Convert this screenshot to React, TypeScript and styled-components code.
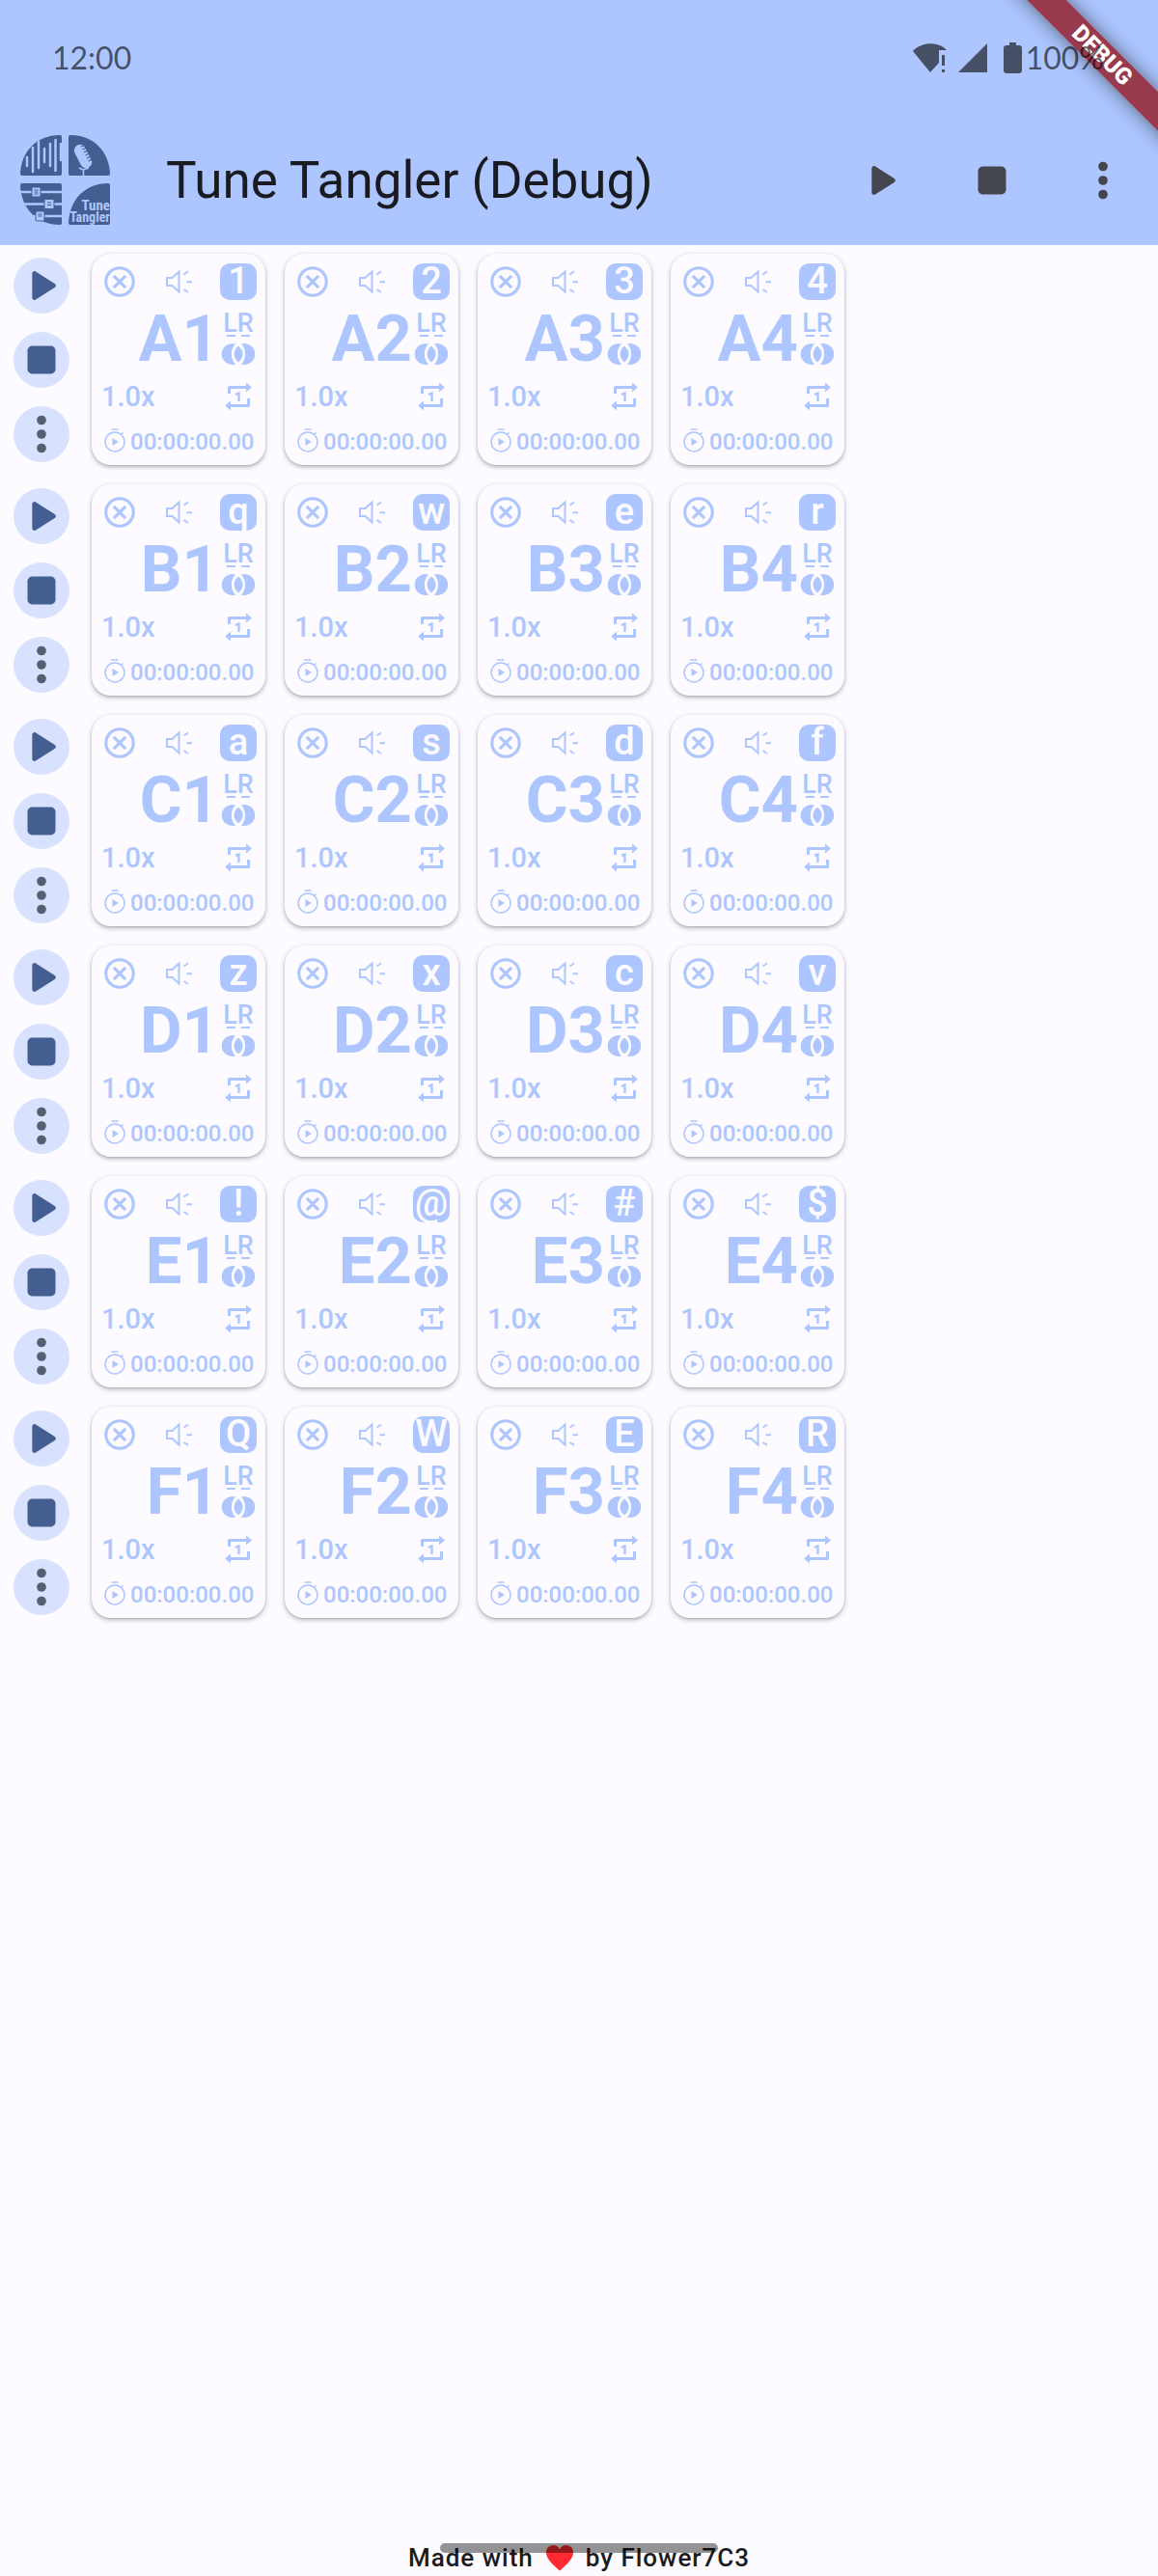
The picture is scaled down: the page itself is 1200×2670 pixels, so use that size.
import React from 'react';
import styled, { createGlobalStyle } from 'styled-components';

const GlobalStyle = createGlobalStyle`
  * {
    box-sizing: border-box;
  }

  body {
    margin: 0;
    background-color: #fdfbff;
    font-family: Roboto, 'Liberation Sans', sans-serif;
  }
`;

const Screen = styled.div`
  position: relative;
  min-height: 100vh;
  display: flex;
  flex-direction: column;
  overflow: hidden;
`;

const Header = styled.header`
  background-color: #adc6ff;
`;

const StatusBar = styled.div`
  position: relative;
  z-index: 2;
  height: 119px;
  padding: 0 56px 0 54px;
  display: flex;
  align-items: center;
  justify-content: space-between;
  font-family: Lato, sans-serif;
  font-size: 32px;
  color: rgba(0, 0, 0, 0.6);
`;

const StatusIcons = styled.div`
  display: flex;
  align-items: center;
`;

const StatusGlyph = styled.svg<{ $gap: number }>`
  display: block;
  margin-right: ${props => props.$gap}px;
  fill: currentColor;
`;

const AppBar = styled.div`
  height: 135px;
  padding-left: 20px;
  display: flex;
  align-items: center;
`;

const Title = styled.h1`
  flex: 1;
  margin: 0 0 0 57px;
  font-size: 53px;
  line-height: 64px;
  font-weight: 400;
  color: #1a1b20;
`;

const BarButton = styled.button`
  width: 115px;
  height: 115px;
  padding: 0;
  border: 0;
  background: none;
  display: grid;
  place-items: center;
  color: #44464f;
`;

const RibbonCorner = styled.div`
  position: absolute;
  z-index: 1;
  top: 0;
  right: 0;
  width: 200px;
  height: 200px;
  overflow: hidden;
  pointer-events: none;
`;

const Ribbon = styled.div`
  position: absolute;
  top: 43px;
  right: -62px;
  width: 240px;
  height: 29px;
  transform: rotate(45deg);
  background-color: rgba(147, 31, 43, 0.84);
  box-shadow: 0 0 20px rgba(0, 0, 0, 0.5);
  color: #fff;
  font-size: 24px;
  line-height: 29px;
  font-weight: 900;
  text-align: center;
`;

const Board = styled.main`
  flex: 1;
  padding-top: 9px;
  display: flex;
  flex-direction: column;
  gap: 20px;
`;

const Row = styled.section`
  display: flex;
  align-items: center;
  gap: 20px;
`;

const Rail = styled.div`
  width: 75px;
  padding-left: 14px;
  display: flex;
  flex-direction: column;
  gap: 19px;
`;

const RoundButton = styled.button<{ $color?: string }>`
  width: 58px;
  height: 58px;
  padding: 0;
  border: 0;
  border-radius: 50%;
  background-color: #d8e2ff;
  display: grid;
  place-items: center;
  color: ${props => props.$color || '#445e91'};
`;

const Card = styled.article`
  width: 180px;
  height: 219px;
  padding: 10px 9px 0 10px;
  border-radius: 20px;
  background-color: #fdfbff;
  box-shadow: 0 2px 5px rgba(0, 0, 0, 0.28), 0 1px 2px rgba(0, 0, 0, 0.1);
  color: #adc6ff;
`;

const CardRow = styled.div<{ $height: number }>`
  height: ${props => props.$height}px;
  display: flex;
  align-items: center;
  justify-content: space-between;
`;

const IconButton = styled.button`
  padding: 0;
  border: 0;
  background: none;
  display: grid;
  place-items: center;
  color: inherit;
  font: inherit;
`;

const KeyBadge = styled.kbd`
  width: 38px;
  height: 38px;
  border-radius: 10px;
  background-color: #adc6ff;
  color: #fdfbff;
  font-family: inherit;
  font-size: 38px;
  line-height: 36px;
  font-weight: 500;
  display: flex;
  justify-content: center;
`;

const NameRow = styled.div`
  height: 80px;
  display: flex;
  align-items: center;
  justify-content: flex-end;
  gap: 1px;
`;

const PadName = styled.h2`
  margin: 0;
  font-size: 67px;
  line-height: 78px;
  font-weight: 700;
`;

const Channels = styled.div`
  width: 38px;
  display: flex;
  flex-direction: column;
  align-items: center;
  gap: 6px;
`;

const Stereo = styled.button`
  padding: 0;
  border: 0;
  background: none;
  color: inherit;
  font-family: inherit;
  font-size: 27px;
  line-height: 24px;
  font-weight: 500;

  svg {
    display: block;
    margin: 0 auto;
  }
`;

const Speed = styled.button`
  padding: 0;
  border: 0;
  background: none;
  color: inherit;
  font-family: inherit;
  font-size: 29px;
  line-height: 36px;
  font-weight: 500;
`;

const TimeRow = styled.div`
  height: 54px;
  padding-left: 2px;
  display: flex;
  align-items: center;
  gap: 4px;
  font-size: 24px;
  font-weight: 500;
`;

const Footer = styled.footer`
  position: relative;
  height: 38px;
  display: flex;
  align-items: center;
  justify-content: center;
  gap: 12px;
  font-size: 26px;
  line-height: 38px;
  font-weight: 500;
  letter-spacing: 1px;
  color: #1a1b20;
`;

const HomeHandle = styled.div`
  position: absolute;
  top: 4px;
  left: 50%;
  width: 24%;
  height: 10px;
  border-radius: 5px;
  transform: translateX(-50%);
  background-color: rgba(0, 0, 0, 0.42);
`;

const PlayIcon = () => (
  <svg width="58" height="58" viewBox="0 0 24 24" fill="currentColor" aria-hidden="true">
    <path d="M8 6.82v10.36c0 .79.87 1.27 1.54.84l8.14-5.18c.62-.39.62-1.29 0-1.69L9.54 5.98C8.87 5.55 8 6.03 8 6.82z" />
  </svg>
);

const StopIcon = () => (
  <svg width="58" height="58" viewBox="0 0 24 24" fill="currentColor" aria-hidden="true">
    <rect x="6" y="6" width="12" height="12" rx="2" />
  </svg>
);

const MoreIcon = () => (
  <svg width="58" height="58" viewBox="0 0 24 24" fill="currentColor" aria-hidden="true">
    <circle cx="12" cy="6" r="2" />
    <circle cx="12" cy="12" r="2" />
    <circle cx="12" cy="18" r="2" />
  </svg>
);

const ClearIcon = () => (
  <svg width="38" height="38" viewBox="0 0 24 24" fill="none" stroke="currentColor" strokeWidth="2" aria-hidden="true">
    <circle cx="12" cy="12" r="9" />
    <path d="M8.1 8.1l7.8 7.8M15.9 8.1l-7.8 7.8" />
  </svg>
);

const SpeakerIcon = () => (
  <svg width="30" height="26" viewBox="0 0 30 26" fill="none" stroke="currentColor" strokeWidth="2" aria-hidden="true">
    <path d="M2 9h5.500l7-6.500v21L7.500 17H2z" />
    <path d="M19.500 5.500l4.500-3M22.500 13.200h5.500M19.500 21l4.500 3" />
  </svg>
);

const MixIcon = () => (
  <svg width="36" height="24" viewBox="0 0 36 24" fill="currentColor" aria-hidden="true">
    <path d="M15 1.500a11 11 0 1 0 0 21c-5.500-5.500-5.500-15.500 0-21zM21 1.500a11 11 0 1 1 0 21c5.500-5.500 5.500-15.500 0-21z" />
    <path d="M18 3.500c6 5 6 12 0 17-6-5-6-12 0-17z" />
  </svg>
);

const RepeatIcon = () => (
  <svg width="38" height="38" viewBox="-5 -4 38 38" fill="none" stroke="currentColor" aria-hidden="true">
    <path d="M4.500 12V5.500H23M24.500 17v7.500H6" strokeWidth="3" strokeLinejoin="round" />
    <path d="M22 .5l6 5-6 5zM6 19.500l-6 5 6 5z" fill="currentColor" stroke="none" />
    <path d="M11 12.800l3.500-1.300v8.500" strokeWidth="2.400" />
  </svg>
);

const TimerIcon = () => (
  <svg width="24" height="28" viewBox="0 0 24 28" fill="none" stroke="currentColor" strokeWidth="1.500" aria-hidden="true">
    <circle cx="12" cy="14" r="10" />
    <path d="M8.500 1h7M18.500 6.500l2-2" />
    <path d="M9.500 10v8l6.500-4z" fill="currentColor" stroke="none" />
  </svg>
);

const Logo = () => (
  <svg width="95" height="95" viewBox="0 0 95 95" role="img" aria-label="Tune Tangler">
    <g fill="#445e91">
      <path d="M44 3v38q0 2-2 2H3q-2 0-2-2C2 18 18 1 42 1q2 0 2 2z" />
      <path d="M51 3v38q0 2 2 2h39q2 0 2-2C93 18 77 1 53 1q-2 0-2 2z" />
      <path d="M44 92V53q0-2-2-2H3q-2 0-2 2C2 77 18 94 42 94q2 0 2-2z" />
      <path d="M94 53v39q0 2-2 2H53q-2 0-2-2C52 68 68 51 92 51q2 0 2 2z" />
    </g>
    <g stroke="#adc6ff" strokeWidth="2.500" strokeLinecap="round">
      <path d="M8 24v9M14 14v25M20 8v27M26 15v14M32 10v23M37.500 6v32M43 10v17" />
      <path d="M1 60h43M6 72.500h38M16 85h28" />
    </g>
    <g fill="#adc6ff" stroke="#445e91" strokeWidth="1">
      <rect x="13" y="55" width="9" height="10" rx="1" />
      <rect x="26" y="67.500" width="10" height="10" rx="1" />
      <rect x="17" y="80" width="9" height="10" rx="1" />
    </g>
    <path d="M15.500 58h4M15.500 60h4M15.500 62h4M29 71h4M29 73.500h4M19.500 83h4M19.500 85h4" stroke="#445e91" />
    <rect x="60" y="10" width="12" height="26" rx="6" fill="#adc6ff" transform="rotate(-27 66 23)" />
    <path d="M64 13l4-2M65.500 16l4-2M67 19l4-2M68.500 22l4-2M70 25l4-2M71.500 28l4-2" stroke="#445e91" strokeWidth="1.200" />
    <path d="M62 35l4 2 6-2M66.500 37v7" stroke="#adc6ff" strokeWidth="1.500" fill="none" />
    <g fill="#adc6ff" fontFamily="'Roboto Condensed', 'Liberation Sans Narrow', Roboto, sans-serif" fontWeight="700" textAnchor="end">
      <text x="94" y="79" fontSize="15">Tune</text>
      <text x="94" y="91" fontSize="14">Tangler</text>
    </g>
  </svg>
);

const rows = [
  { name: 'A', keys: ['1', '2', '3', '4'] },
  { name: 'B', keys: ['q', 'w', 'e', 'r'] },
  { name: 'C', keys: ['a', 's', 'd', 'f'] },
  { name: 'D', keys: ['z', 'x', 'c', 'v'] },
  { name: 'E', keys: ['!', '@', '#', '$'] },
  { name: 'F', keys: ['Q', 'W', 'E', 'R'] },
];

const Pad: React.FC<{ name: string; hotkey: string }> = ({ name, hotkey }) => (
  <Card>
    <CardRow $height={38}>
      <IconButton aria-label={`Clear ${name}`}><ClearIcon /></IconButton>
      <IconButton aria-label={`Volume ${name}`}><SpeakerIcon /></IconButton>
      <KeyBadge>{hotkey}</KeyBadge>
    </CardRow>
    <NameRow>
      <PadName>{name}</PadName>
      <Channels>
        <Stereo>
          LR
          <svg width="24" height="2" viewBox="0 0 24 2" fill="currentColor" aria-hidden="true">
            <path d="M0 0h9v2H0zM15 0h9v2h-9z" />
          </svg>
        </Stereo>
        <IconButton aria-label={`Mix ${name}`}><MixIcon /></IconButton>
      </Channels>
    </NameRow>
    <CardRow $height={40}>
      <Speed>1.0x</Speed>
      <IconButton aria-label={`Repeat ${name}`}><RepeatIcon /></IconButton>
    </CardRow>
    <TimeRow>
      <TimerIcon />
      <span>00:00:00.00</span>
    </TimeRow>
  </Card>
);

const App: React.FC = () => {
  return (
    <Screen>
      <GlobalStyle />
      <Header>
        <StatusBar>
          <span>12:00</span>
          <StatusIcons>
            <StatusGlyph $gap={11} width="36" height="32" viewBox="0 0 36 32" aria-hidden="true">
              <path d="M0 9C9-1 27-1 35 8H27v13l-9 10z" />
              <path d="M30 13h3v11h-3zM30 28h3v3h-3z" />
            </StatusGlyph>
            <StatusGlyph $gap={17} width="30" height="30" viewBox="0 0 30 30" aria-hidden="true">
              <path d="M30 0v30H0z" />
            </StatusGlyph>
            <StatusGlyph $gap={4} width="19" height="32" viewBox="0 0 19 32" aria-hidden="true">
              <path d="M6 0h7v3h3q3 0 3 3v23q0 3-3 3H3q-3 0-3-3V6q0-3 3-3h3z" />
            </StatusGlyph>
            <span>100%</span>
          </StatusIcons>
        </StatusBar>
        <AppBar>
          <Logo />
          <Title>Tune Tangler (Debug)</Title>
          <BarButton aria-label="Play all"><PlayIcon /></BarButton>
          <BarButton aria-label="Stop all"><StopIcon /></BarButton>
          <BarButton aria-label="Menu"><MoreIcon /></BarButton>
        </AppBar>
      </Header>
      <Board>
        {rows.map(row => (
          <Row key={row.name}>
            <Rail>
              <RoundButton aria-label={`Play row ${row.name}`}><PlayIcon /></RoundButton>
              <RoundButton aria-label={`Stop row ${row.name}`}><StopIcon /></RoundButton>
              <RoundButton $color="#565e71" aria-label={`Row ${row.name} menu`}><MoreIcon /></RoundButton>
            </Rail>
            {row.keys.map((key, i) => (
              <Pad key={key} name={`${row.name}${i + 1}`} hotkey={key} />
            ))}
          </Row>
        ))}
      </Board>
      <Footer>
        <span>Made with</span>
        <svg width="30" height="28" viewBox="0 0 30 28" fill="#ff2a2f" role="img" aria-label="love">
          <path d="M15 27.500C9 22 1 16 1 8.500 1 1 11-2 15 5c4-7 14-4 14 3.500 0 7.500-8 13.500-14 19z" />
        </svg>
        <span>by Flower7C3</span>
        <HomeHandle />
      </Footer>
      <RibbonCorner>
        <Ribbon>DEBUG</Ribbon>
      </RibbonCorner>
    </Screen>
  );
};

export default App;
